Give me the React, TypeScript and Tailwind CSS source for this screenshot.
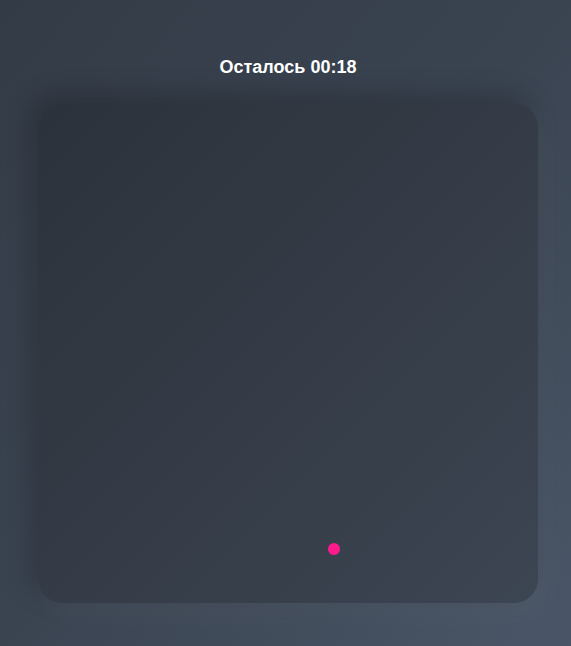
import React from "react";

export default function App() {
  return (
    <div className="min-h-screen w-full bg-gradient-to-br from-[#333b46] via-[#3a4451] to-[#4a5667] pl-[5px] pt-[53px] font-['Liberation_Sans',Arial,sans-serif]">
      <div className="flex flex-col items-center gap-[22px]">
        <h1 className="text-lg leading-7 font-bold text-white">Осталось 00:18</h1>
        <div className="relative h-[500px] w-[500px] rounded-3xl bg-gradient-to-br from-[#2c323b] to-[#3c4552] shadow-[-6px_-8px_26px_rgba(0,0,0,0.22),8px_10px_26px_rgba(255,255,255,0.05)]">
          <span className="absolute left-[290px] top-[440px] h-3 w-3 rounded-full bg-[#ff1a8c]" />
        </div>
      </div>
    </div>
  );
}
